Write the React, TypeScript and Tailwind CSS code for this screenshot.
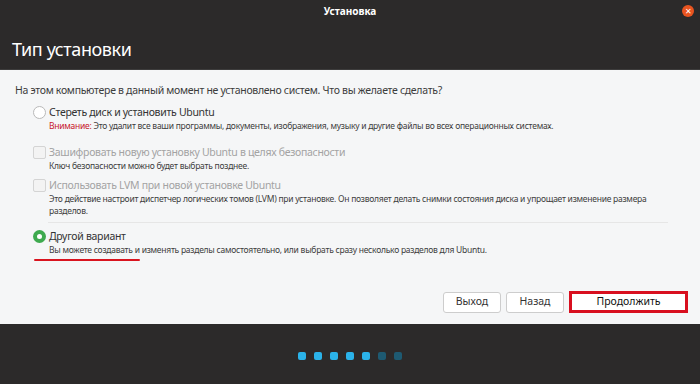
import React from "react";

const font = { fontFamily: '"Noto Sans", "Open Sans", sans-serif' };

const Radio = ({ checked }: { checked?: boolean }) =>
  checked ? (
    <span className="flex items-center justify-center w-[13px] h-[13px] rounded-full bg-[#3eaa4f] shrink-0">
      <span className="w-[5px] h-[5px] rounded-full bg-white" />
    </span>
  ) : (
    <span className="w-[13px] h-[13px] rounded-full border border-[#b9b9b9] bg-white shrink-0" />
  );

const Check = () => (
  <span className="w-[13px] h-[13px] rounded-[2px] border border-[#d4d4d4] bg-[#f3f3f3] shrink-0" />
);

const Option = ({
  control,
  label,
  disabled,
  children,
}: {
  control: React.ReactNode;
  label: string;
  disabled?: boolean;
  children: React.ReactNode;
}) => (
  <div className="pl-[33px]">
    <div className="flex items-center gap-[3px] h-[15px]">
      {control}
      <span
        className={`text-[10.5px] leading-[15px] tracking-[-0.3px] ${disabled ? "text-[#a3a3a3]" : "text-[#333]"}`}
      >
        {label}
      </span>
    </div>
    <div className="pl-[16px] text-[8.5px] leading-[12px] tracking-[-0.25px] text-[#3d3d3d] pr-[28px]">
      {children}
    </div>
  </div>
);

export default function App() {
  return (
    <div className="w-[700px] h-[384px] flex flex-col bg-[#2c2a2a] overflow-hidden" style={font}>
      {/* header */}
      <div className="h-[70px] border-b border-[#3d3c3c] flex flex-col px-[12px]">
        <div className="relative h-[22px] flex items-center justify-center">
          <span className="text-white text-[10px] font-bold">Установка</span>
          <span className="absolute right-[-6px] top-[5px] w-[12px] h-[12px] rounded-full bg-[#e95420] flex items-center justify-center text-white text-[8px] leading-none">
            ✕
          </span>
        </div>
        <div className="mt-[15px] text-white text-[18px] leading-[24px] tracking-[-0.4px]">Тип установки</div>
      </div>

      {/* content */}
      <div className="h-[254px] bg-[#f5f6f7] pt-[13px] flex flex-col">
        <div className="pl-[15px] text-[10.5px] leading-[14px] tracking-[-0.3px] text-[#3c3c3c]">
          На этом компьютере в данный момент не установлено систем. Что вы желаете сделать?
        </div>

        <div className="mt-[8px]">
          <Option control={<Radio />} label="Стереть диск и установить Ubuntu">
            <span className="text-[#c7162b]">Внимание:</span> Это удалит все ваши программы, документы, изображения,
            музыку и другие файлы во всех операционных системах.
          </Option>
        </div>

        <div className="mt-[13px]">
          <Option control={<Check />} label="Зашифровать новую установку Ubuntu в целях безопасности" disabled>
            Ключ безопасности можно будет выбрать позднее.
          </Option>
        </div>

        <div className="mt-[6px]">
          <Option control={<Check />} label="Использовать LVM при новой установке Ubuntu" disabled>
            Это действие настроит диспетчер логических томов (LVM) при установке. Он позволяет делать снимки
            состояния диска и упрощает изменение размера разделов.
          </Option>
        </div>

        <div className="ml-[48px] mr-[32px] mt-[5px] h-px bg-[#e6e6e6]" />

        <div className="mt-[6px]">
          <Option control={<Radio checked />} label="Другой вариант">
            Вы можете создавать и изменять разделы самостоятельно, или выбрать сразу несколько разделов для Ubuntu.
          </Option>
        </div>
        <div className="ml-[34px] mt-[3px] w-[106px] h-[2px] rounded-full bg-[#d9141f]" />

        <div className="mt-auto mb-[11px] flex justify-end items-center gap-[5px] pr-[12px]">
          <button className="w-[58px] h-[21px] bg-white border border-[#cdcdcd] rounded-[3px] text-[10.5px] text-[#333]">
            Выход
          </button>
          <button className="w-[58px] h-[21px] bg-white border border-[#cdcdcd] rounded-[3px] text-[10.5px] text-[#333]">
            Назад
          </button>
          <div className="w-[119px] h-[22px] border-[3px] border-[#d80f1f] bg-white flex items-center justify-center">
            <span className="text-[10.5px] text-[#111]">Продолжить</span>
          </div>
        </div>
      </div>

      {/* footer */}
      <div className="flex-1 flex items-center justify-center gap-[8px] pt-[3px]">
        {[1, 1, 1, 1, 1, 0, 0].map((on, i) => (
          <span key={i} className={`w-[8px] h-[8px] rounded-[2px] ${on ? "bg-[#2bb3ea]" : "bg-[#1e5a72]"}`} />
        ))}
      </div>
    </div>
  );
}
